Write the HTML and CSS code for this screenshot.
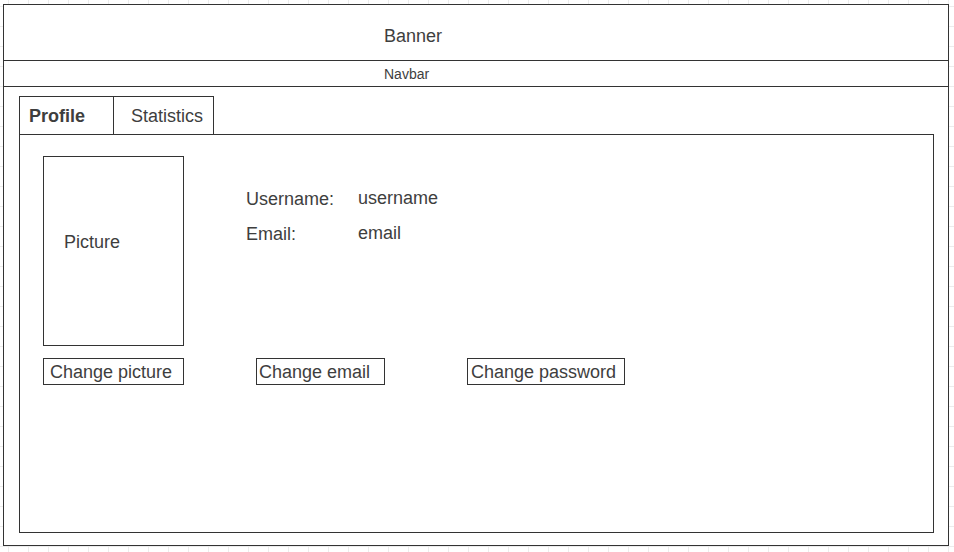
FILE: index.html
```html
<!DOCTYPE html>
<html lang="en">
<head>
<meta charset="utf-8">
<title>Profile</title>
<link rel="stylesheet" href="styles.css">
</head>
<body>
  <div class="frame">
    <div class="banner">Banner</div>
    <div class="navbar">Navbar</div>
    <div class="main">
      <div class="tabs">
        <div class="tab tab-profile">Profile</div>
        <div class="tab tab-stats">Statistics</div>
      </div>
      <div class="panel">
        <div class="top">
          <div class="picture">Picture</div>
          <div class="info">
            <div class="row"><span class="label">Username:</span><span class="value">username</span></div>
            <div class="row"><span class="label">Email:</span><span class="value">email</span></div>
          </div>
        </div>
        <div class="actions">
          <div class="btn btn-picture">Change picture</div>
          <div class="btn btn-email">Change email</div>
          <div class="btn btn-password">Change password</div>
        </div>
      </div>
    </div>
  </div>
</body>
</html>
```
FILE: styles.css
```css
html, body {
  margin: 0;
  height: 100%;
}
body {
  background-color: #fff;
  background-image:
    linear-gradient(to right, #ececec 1px, transparent 1px),
    linear-gradient(to bottom, #ececec 1px, transparent 1px);
  background-size: 20px 20px;
  background-position: 8px 6px;
  font-family: "Liberation Sans", Arial, sans-serif;
  color: #3e3e3e;
}
.frame {
  box-sizing: border-box;
  margin: 4px 0 0 3px;
  width: 946px;
  height: 542px;
  border: 1px solid #333;
  background: #fff;
  display: flex;
  flex-direction: column;
}
.banner {
  box-sizing: border-box;
  height: 56px;
  border-bottom: 1px solid #333;
  padding: 22px 0 0 380px;
  font-size: 18px;
  line-height: 18px;
}
.navbar {
  box-sizing: border-box;
  height: 26px;
  border-bottom: 1px solid #333;
  padding: 6px 0 0 380px;
  font-size: 14px;
  line-height: 14px;
}
.main {
  flex: 1;
  display: flex;
  flex-direction: column;
  padding: 9px 14px 12px 15px;
}
.tabs {
  display: flex;
  height: 38px;
}
.tab {
  box-sizing: border-box;
  height: 38px;
  border: 1px solid #333;
  border-bottom: none;
  padding-top: 1px;
  font-size: 18px;
  line-height: 36px;
}
.tab-profile {
  width: 95px;
  margin-right: -1px;
  padding-left: 9px;
  font-weight: bold;
}
.tab-stats {
  width: 101px;
  padding-left: 17px;
}
.panel {
  flex: 1;
  border: 1px solid #333;
  padding: 21px 0 0 23px;
  font-size: 18px;
}
.top {
  display: flex;
}
.picture {
  box-sizing: border-box;
  width: 141px;
  height: 190px;
  border: 1px solid #333;
  padding: 74px 0 0 20px;
  line-height: 22px;
}
.info {
  margin: 26px 0 0 62px;
}
.row {
  display: flex;
  line-height: 35px;
}
.label {
  width: 112px;
}
.value {
  margin-top: -1px;
}
.actions {
  display: flex;
  margin-top: 12px;
}
.btn {
  box-sizing: border-box;
  height: 27px;
  border: 1px solid #333;
  padding-top: 4px;
  line-height: 19px;
  white-space: nowrap;
}
.btn-picture {
  width: 141px;
  padding-left: 6px;
}
.btn-email {
  width: 129px;
  margin-left: 72px;
  padding-left: 2px;
}
.btn-password {
  width: 158px;
  margin-left: 82px;
  padding-left: 3px;
}
```
